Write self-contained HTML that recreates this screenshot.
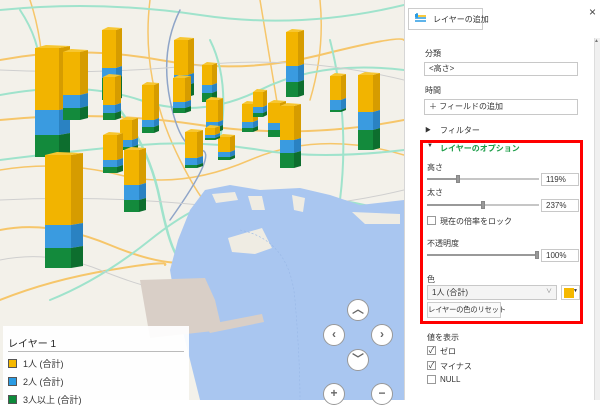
<!DOCTYPE html>
<html><head><meta charset="utf-8">
<style>
*{margin:0;padding:0;box-sizing:border-box}
body{width:600px;height:400px;overflow:hidden;position:relative;background:#fff;font-family:"Liberation Sans","Noto Sans CJK JP",sans-serif;font-size:8px;color:#333}
#map{position:absolute;left:0;top:0;width:404px;height:400px}
#panel{position:absolute;left:404px;top:0;width:196px;height:400px;background:#fff;border-left:1px solid #d6d6d6}
.a{position:absolute;white-space:nowrap}
.in{position:absolute;border:1px solid #c8c8c8;background:#fff;height:14px;line-height:12px;padding-left:4px}
.tr{position:absolute;height:2px;background:#c6c6c6}
.tr i{position:absolute;left:0;top:0;height:2px;background:#999}
.hd{position:absolute;width:4px;height:8px;background:#999;border:1px solid #888;top:-3px}
.cb{position:absolute;width:9px;height:9px;border:1px solid #999;background:#fff;font-size:8px;line-height:7px;text-align:center;color:#333}
.nav{position:absolute;width:22px;height:22px;border-radius:50%;background:#fff;border:1.5px solid #999;color:#666;text-align:center;line-height:19px;font-size:12px;font-weight:bold}
</style></head><body>
<svg id="map" width="404" height="400" viewBox="0 0 404 400">
<rect width="404" height="400" fill="#f3f1ea"/>
<g fill="none" stroke-linecap="round">
<path d="M0 60 Q80 45 160 60 T320 55 T404 40" stroke="#f6c66a" stroke-width="2"/>
<path d="M0 120 Q100 110 200 125 T404 120" stroke="#f6c66a" stroke-width="2"/>
<path d="M0 170 Q60 160 120 175 T250 160 T404 155" stroke="#f6c66a" stroke-width="1.5"/>
<path d="M0 230 Q50 220 110 245 T200 260" stroke="#f6c66a" stroke-width="2"/>
<path d="M0 300 Q50 280 110 270 T165 265" stroke="#f6c66a" stroke-width="2"/>
<path d="M30 0 Q50 60 40 140" stroke="#f6c66a" stroke-width="1.5"/>
<path d="M260 0 Q270 60 280 120" stroke="#f6c66a" stroke-width="1.5"/>
<path d="M320 0 Q325 50 310 100" stroke="#f6c66a" stroke-width="1.5"/>
<path d="M150 0 Q140 80 180 160 T230 200" stroke="#f6c66a" stroke-width="1.5"/>
<path d="M0 10 Q100 0 200 15 T404 5" stroke="#9fe3cc" stroke-width="2"/>
<path d="M20 10 Q40 40 40 70" stroke="#9fe3cc" stroke-width="2"/>
<path d="M0 95 Q80 80 140 100 T260 90 T404 70" stroke="#9fe3cc" stroke-width="2"/>
<path d="M0 160 Q80 150 140 145 T260 150 T404 150" stroke="#9fe3cc" stroke-width="2"/>
<path d="M120 110 Q150 150 160 200 T180 260 T210 400" stroke="#9fe3cc" stroke-width="2.5"/>
<path d="M50 300 Q100 280 150 240 T230 200 Q300 185 404 215" stroke="#9fe3cc" stroke-width="2"/>
<path d="M210 40 Q230 80 220 140" stroke="#9fe3cc" stroke-width="2"/>
<path d="M330 40 Q350 120 340 200" stroke="#9fe3cc" stroke-width="2"/>
<path d="M180 10 Q160 50 170 100 T200 150 T170 220" stroke="#8fa5c8" stroke-width="1.5"/>
<path d="M0 70 Q100 75 200 65 T404 80" stroke="#cfcfcf" stroke-width="1"/>
<path d="M0 200 Q100 195 200 205 T404 190" stroke="#cfcfcf" stroke-width="1"/>
<path d="M0 260 Q50 250 100 270 T170 290" stroke="#cfcfcf" stroke-width="1"/>
</g>
<path d="M200 400 L185 340 L175 300 L170 270 L178 240 L190 210 L205 190 L230 185 L260 190 L300 188 L330 195 L360 205 L404 200 L404 400 Z" fill="#a9c6f0"/>
<path d="M212 194 L235 192 L238 200 L216 203 Z M248 196 L262 196 L265 210 L252 210 Z M292 195 L305 198 L303 212 L294 210 Z M228 238 L262 228 L272 248 L255 254 L232 252 Z M352 212 L400 214 L400 224 L365 224 Z" fill="#efece3"/>
<path d="M140 280 L205 278 L215 300 L222 330 L150 338 Z M205 325 L262 314 L264 322 L210 333 Z" fill="#d9cfc7"/>
<path d="M240 230 Q290 240 295 300 T300 400" stroke="#98b7e6" stroke-width="0.6" fill="none" stroke-dasharray="2 2"/>
<g id="bars"></g>
</svg>
<div class="a" style="left:3px;top:326px;width:186px;height:74px;background:rgba(255,255,255,.92)"></div>
<div class="a" style="left:8px;top:335px;font-size:10px;color:#222">レイヤー 1</div>
<div class="a" style="left:8px;top:351px;width:176px;height:1px;background:#bbb"></div>
<div class="a" style="left:8px;top:359px;width:9px;height:9px;background:#f5b800;border:1px solid #555"></div>
<div class="a" style="left:23px;top:357px;font-size:9px">1人 (合計)</div>
<div class="a" style="left:8px;top:377px;width:9px;height:9px;background:#2a9be3;border:1px solid #555"></div>
<div class="a" style="left:23px;top:375px;font-size:9px">2人 (合計)</div>
<div class="a" style="left:8px;top:395px;width:9px;height:9px;background:#0c8a3a;border:1px solid #555"></div>
<div class="a" style="left:23px;top:393px;font-size:9px">3人以上 (合計)</div>
<div class="nav" style="left:347px;top:299px">︿</div>
<div class="nav" style="left:323px;top:324px">‹</div>
<div class="nav" style="left:371px;top:324px">›</div>
<div class="nav" style="left:347px;top:349px">﹀</div>
<div class="nav" style="left:323px;top:383px">+</div>
<div class="nav" style="left:371px;top:383px">−</div>

<div id="panel">
<div class="a" style="left:3px;top:8px;width:75px;height:22px;border:1px solid #ccc;background:#fff"></div>
<svg class="a" style="left:9px;top:12px" width="14" height="12"><rect x="1" y="2" width="3" height="3" fill="#2a9be3"/><path d="M3 1v5M1 6h11M1 9h11" stroke="#2a9be3" stroke-width="1.5"/><path d="M4 4h8" stroke="#f5b800" stroke-width="1.5"/></svg>
<div class="a" style="left:28px;top:14px">レイヤーの追加</div>
<div class="a" style="left:184px;top:5px;font-size:12px;color:#444">×</div>
<div class="a" style="left:189px;top:38px;width:7px;height:362px;background:#f0f0f0;border-left:1px solid #ddd"></div>
<div class="a" style="left:189px;top:38px;font-size:5px;color:#777">▲</div>
<div class="a" style="left:20px;top:48px">分類</div>
<div class="in" style="left:19px;top:62px;width:154px">&lt;高さ&gt;</div>
<div class="a" style="left:20px;top:85px">時間</div>
<div class="in" style="left:19px;top:99px;width:154px;height:16px;line-height:14px">＋ フィールドの追加</div>
<div class="a" style="left:20px;top:125px;font-size:6px;color:#333">▶</div>
<div class="a" style="left:35px;top:125px">フィルター</div>
<div class="a" style="left:15px;top:140px;width:163px;height:184px;border:3px solid #f00"></div>
<div class="a" style="left:22px;top:143px;font-size:6px">▼</div>
<div class="a" style="left:35px;top:143px;color:#1e9e4a;font-weight:bold">レイヤーのオプション</div>
<div class="a" style="left:22px;top:162px">高さ</div>
<div class="tr" style="left:22px;top:178px;width:112px"><i style="width:31px"></i><div class="hd" style="left:29px"></div></div>
<div class="in" style="left:136px;top:173px;width:38px;height:13px;line-height:11px">119%</div>
<div class="a" style="left:22px;top:187px">太さ</div>
<div class="tr" style="left:22px;top:204px;width:112px"><i style="width:55px"></i><div class="hd" style="left:54px"></div></div>
<div class="in" style="left:136px;top:199px;width:38px;height:13px;line-height:11px">237%</div>
<div class="cb" style="left:22px;top:216px"></div>
<div class="a" style="left:35px;top:216px">現在の倍率をロック</div>
<div class="a" style="left:22px;top:238px">不透明度</div>
<div class="tr" style="left:22px;top:254px;width:112px"><i style="width:110px"></i><div class="hd" style="left:108px"></div></div>
<div class="in" style="left:136px;top:249px;width:38px;height:13px;line-height:11px">100%</div>
<div class="a" style="left:22px;top:274px">色</div>
<div class="in" style="left:22px;top:285px;width:130px;height:15px;line-height:13px;background:#f4f4f4">1人 (合計)<span style="position:absolute;right:4px;font-size:6px;color:#777">∨</span></div>
<div class="a" style="left:156px;top:285px;width:19px;height:15px;border:1px solid #ccc;background:#fff"><div style="position:absolute;left:2px;top:2px;width:10px;height:10px;background:#f5b800"></div><span style="position:absolute;right:1px;top:2px;font-size:5px">▼</span></div>
<div class="a" style="left:22px;top:302px;width:74px;height:16px;border:1px solid #ccc;background:#fafafa;line-height:14px;text-align:center;font-size:7.3px;letter-spacing:-0.2px">レイヤーの色のリセット</div>
<div class="a" style="left:22px;top:332px">値を表示</div>
<div class="cb" style="left:22px;top:346px">✓</div><div class="a" style="left:35px;top:346px">ゼロ</div>
<div class="cb" style="left:22px;top:361px">✓</div><div class="a" style="left:35px;top:361px">マイナス</div>
<div class="cb" style="left:22px;top:375px"></div><div class="a" style="left:35px;top:375px">NULL</div>
</div>
<script>
var B=[[35,35,48,110,135,157],[63,25,52,95,108,120],[102,20,30,68,78,100],[174,20,40,75,85,97],[202,15,65,85,93,102],[286,18,32,66,82,97],[103,18,77,105,113,120],[142,17,85,120,127,133],[173,18,78,102,108,113],[120,18,120,140,147,150],[103,20,135,160,167,173],[124,22,150,185,200,212],[185,18,132,158,165,168],[206,17,100,122,127,132],[218,17,137,152,157,160],[205,15,128,135,138,140],[242,16,104,122,128,132],[253,14,92,107,113,117],[268,18,103,123,130,137],[330,16,76,100,110,112],[358,22,75,112,130,150],[280,21,106,140,153,168],[45,38,155,225,248,268]];
var s='';
B.forEach(function(b){var x=b[0],w=b[1],f=Math.round(w*.68),sd=w-f,t=b[2];
var cols=[['#f2b400','#d69c00'],['#3a9be0','#2a82c2'],['#138a3c','#0d6e2e']];
for(var i=0;i<3;i++){var y1=b[2+i],y2=b[3+i];
s+='<rect x="'+x+'" y="'+y1+'" width="'+f+'" height="'+(y2-y1)+'" fill="'+cols[i][0]+'"/>';
s+='<polygon points="'+(x+f)+','+y1+' '+(x+w)+','+(y1-2)+' '+(x+w)+','+(y2-2)+' '+(x+f)+','+y2+'" fill="'+cols[i][1]+'"/>';}
s+='<polygon points="'+x+','+t+' '+(x+f)+','+t+' '+(x+w)+','+(t-2)+' '+(x+sd)+','+(t-3)+'" fill="#f7c630"/>';});
document.getElementById('bars').innerHTML=s;
</script>
</body></html>
